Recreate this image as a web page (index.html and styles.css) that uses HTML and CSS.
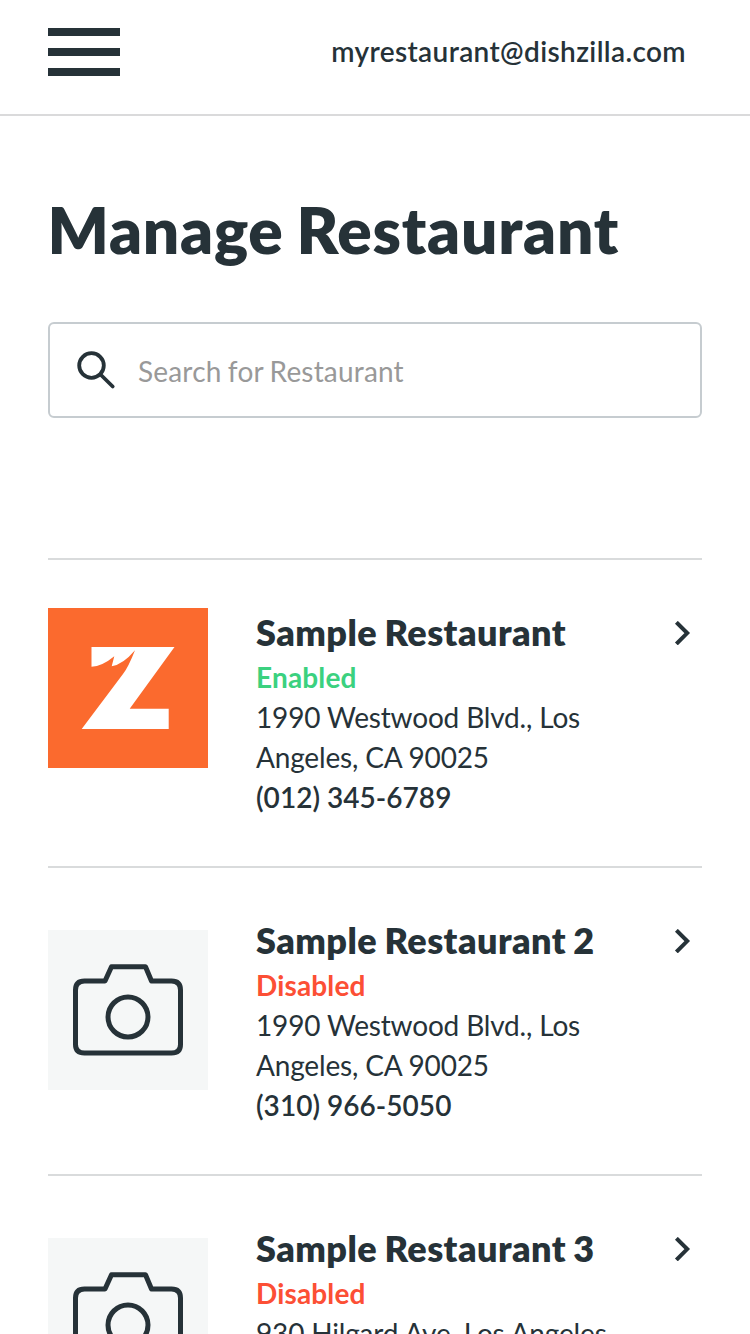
FILE: index.html
```html
<!DOCTYPE html>
<html lang="en">
<head>
<meta charset="utf-8">
<title>Manage Restaurant</title>
<link rel="stylesheet" href="styles.css">
</head>
<body>
<svg class="defs" width="0" height="0" aria-hidden="true">
  <symbol id="camera" viewBox="0 0 160 160"><path d="M36.500 51H57l6.500-14.300h34L103.500 51h20q9 0 9 9v54.500q0 8.500-9 8.500h-87q-9 0-9-8.500V60q0-9 9-9z"/><circle cx="80" cy="87" r="20"/></symbol>
  <symbol id="chevron" viewBox="0 0 18 24"><path d="M3.800 2.700l9.400 9.400-9.400 9.400"/></symbol>
</svg>
<header class="topbar">
  <div class="menu"><span></span><span></span><span></span></div>
  <div class="account">myrestaurant@dishzilla.com</div>
</header>
<main class="page">
  <h1 class="title">Manage Restaurant</h1>
  <label class="search">
    <svg class="search-icon" viewBox="0 0 40 40"><circle cx="15.500" cy="15.500" r="12.300"/><path d="M24.500 24.500L36.700 36.500"/></svg>
    <input class="search-input" type="text" placeholder="Search for Restaurant">
  </label>
  <section class="list">
    <article class="item">
      <svg class="thumb brand" viewBox="0 0 160 160"><path d="M43.500 39h83L81.700 100.700h39V121h-87L75 66Q80 60 87 42.300Q75 56.500 63.700 58.300L66.300 48.300Q54 58.500 43.500 58.700z"/></svg>
      <div class="info"><h2 class="name">Sample Restaurant</h2><p class="status enabled">Enabled</p><p class="address">1990 Westwood Blvd., Los<br>Angeles, CA 90025</p><p class="phone">(012) 345-6789</p></div>
      <svg class="chevron"><use href="#chevron"/></svg>
    </article>
    <article class="item">
      <svg class="thumb photo"><use href="#camera"/></svg>
      <div class="info"><h2 class="name">Sample Restaurant 2</h2><p class="status disabled">Disabled</p><p class="address">1990 Westwood Blvd., Los<br>Angeles, CA 90025</p><p class="phone">(310) 966-5050</p></div>
      <svg class="chevron"><use href="#chevron"/></svg>
    </article>
    <article class="item">
      <svg class="thumb photo"><use href="#camera"/></svg>
      <div class="info"><h2 class="name">Sample Restaurant 3</h2><p class="status disabled">Disabled</p><p class="address">930 Hilgard Ave, Los Angeles</p></div>
      <svg class="chevron"><use href="#chevron"/></svg>
    </article>
  </section>
</main>
</body>
</html>
```
FILE: styles.css
```css
* { box-sizing: border-box; }
body { margin: 0; height: 1334px; overflow: hidden; background: #fff; color: #263238; font-family: Lato, sans-serif; font-size: 28px; line-height: 40px; }
h1, h2, p { margin: 0; }
.defs { display: block; }
.topbar { height: 116px; padding: 28px 64px 0 48px; display: flex; justify-content: space-between; border-bottom: 2px solid #dadadb; }
.menu { width: 72px; height: 48px; display: flex; flex-direction: column; justify-content: space-between; }
.menu span { height: 8px; background: #263238; }
.account { line-height: 47px; font-weight: 600; letter-spacing: 0.380px; }
.page { padding: 74px 48px 0; }
.title { font-size: 64px; font-weight: 800; line-height: 80px; letter-spacing: 0.750px; word-spacing: -2.500px; margin-left: -0.500px; }
.search { margin-top: 52px; height: 96px; border: 2px solid #c6ccd0; border-radius: 6px; display: flex; align-items: center; padding-left: 26px; }
.search-icon { width: 40px; height: 40px; fill: none; stroke: #263238; stroke-width: 3.800; stroke-linecap: round; }
.search-input { flex: 1; margin-left: 22px; padding: 2px 0 0; border: 0; outline: 0; font: 28px Lato, sans-serif; letter-spacing: 0.180px; word-spacing: -1px; background: transparent; }
.search-input::placeholder { color: #999; opacity: 1; }
.list { margin-top: 140px; }
.item { height: 308px; border-top: 2px solid #d9dbdc; padding-top: 48px; display: flex; align-items: flex-start; }
.thumb { width: 160px; height: 160px; flex: none; }
.brand { background: #fb6a2e; fill: #fff; }
.photo { margin-top: 14px; background: #f5f7f7; fill: none; stroke: #263238; stroke-width: 5; stroke-linejoin: round; }
.info { margin: -1px 0 0 48px; flex: 1; white-space: nowrap; }
.name { font-size: 36px; line-height: 50px; font-weight: 800; letter-spacing: 0.450px; word-spacing: -1.500px; }
.status { font-weight: 700; letter-spacing: 0.150px; }
.enabled { color: #3bd17f; }
.disabled { color: #fc4f35; }
.address { letter-spacing: -0.170px; }
.phone { font-weight: 600; letter-spacing: 0.030px; }
.chevron { width: 18px; height: 24px; margin: 13px 10px 0 0; fill: none; stroke: #263238; stroke-width: 4; stroke-linecap: square; }
```
